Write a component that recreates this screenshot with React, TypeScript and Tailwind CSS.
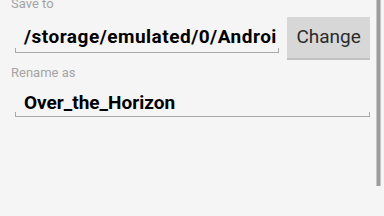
import React from "react";

function Field({ text, className, textClass }: { text: string; className?: string; textClass?: string }) {
  return (
    <div className={"relative border-b border-[#a8a8a8] " + (className ?? "")}>
      <div className="absolute left-0 bottom-0 w-px h-[4px] bg-[#a8a8a8]" />
      <div className="absolute right-0 bottom-0 w-px h-[4px] bg-[#a8a8a8]" />
      <div className={"pl-[9px] text-[19px] leading-[22px] font-bold text-black whitespace-nowrap overflow-hidden " + (textClass ?? "")}>
        {text}
      </div>
    </div>
  );
}

export default function App() {
  return (
    <div className="w-[384px] h-[216px] bg-[#f5f5f5] relative overflow-hidden font-['Roboto',sans-serif]">
      <div className="pl-[11px] pr-[14px] mt-[-4px]">
        <div className="text-[13px] leading-[15px] text-[#a4a4a4]">Save to</div>
        <div className="flex items-start">
          <Field text="/storage/emulated/0/Androi" className="ml-[4px] w-[265px] pt-[15px] pb-[4px]" textClass="tracking-[0.5px]" />
          <div className="ml-[8px] mt-[6px] w-[83px] h-[43px] bg-[#d7d7d7] border-b-2 border-[#c2c2c2] flex items-center justify-center text-[19px] text-[#2b2b2b]">
            Change
          </div>
        </div>
        <div className="mt-[5px] text-[13px] leading-[15px] text-[#a4a4a4]">Rename as</div>
        <Field text="Over_the_Horizon" className="ml-[4px] w-[355px] pt-[12px] pb-[2px]" />
      </div>
      <div className="absolute left-[376px] top-0 w-[5px] h-[186px] bg-[#9c9c9c] border-x border-[#c6c6c6]" />
    </div>
  );
}
